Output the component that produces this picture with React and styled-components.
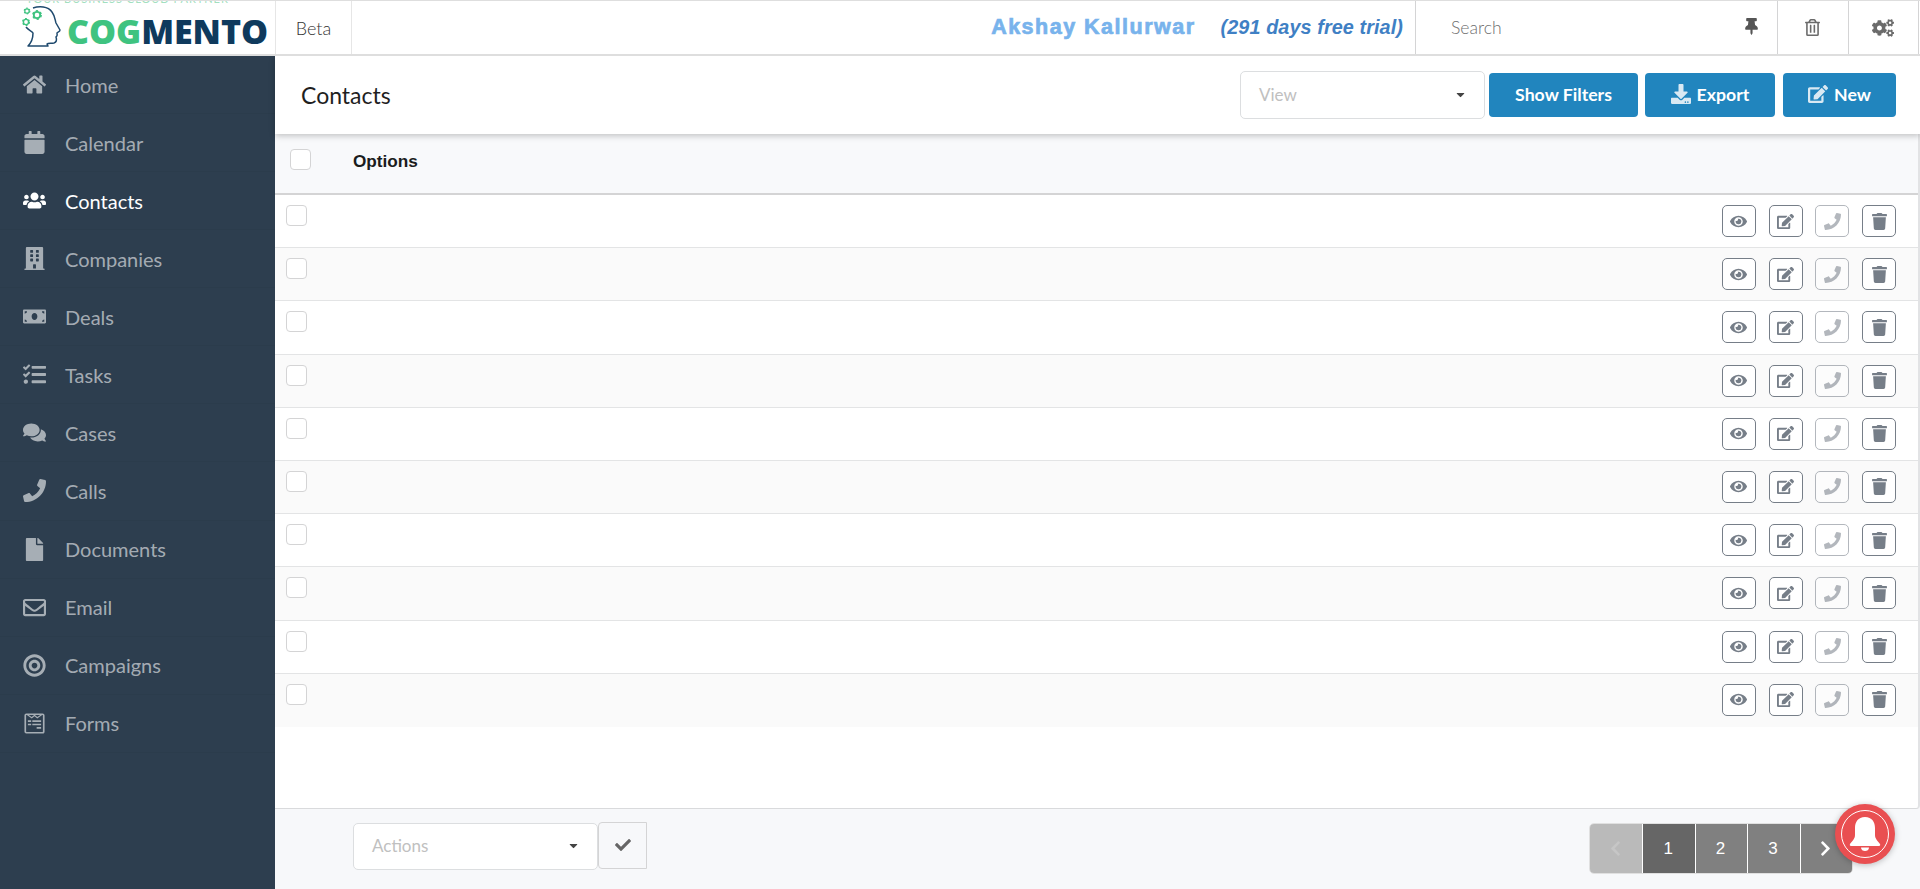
import React from 'react';
import styled, { createGlobalStyle } from 'styled-components';
import {
  FaBuilding, FaBullseye, FaCalendar, FaCaretDown, FaCheck, FaChevronLeft, FaChevronRight,
  FaCogs, FaComments, FaDownload, FaEdit, FaEye, FaFile, FaHome, FaMoneyBill, FaPhone, FaRegEnvelope,
  FaRegTrashAlt, FaTasks, FaThumbtack, FaTrash, FaUsers, FaWpforms,
} from 'react-icons/fa';

const GlobalStyle = createGlobalStyle`
  html, body { margin: 0; padding: 0; height: 100%; overflow: hidden; background: #fff; }
  body { font-family: Lato, "Open Sans", sans-serif; color: #1b1c1d; }
  * { box-sizing: border-box; }
`;

const Page = styled.div`
  position: relative;
  width: 1920px;
  height: 889px;
  display: flex;
  flex-direction: column;
  overflow: hidden;
`;

const TopBar = styled.header`
  height: 56px;
  flex: none;
  display: flex;
  align-items: stretch;
  padding-right: 1px;
  background: #fff;
  border-top: 1px solid #dedede;
  border-bottom: 2px solid #dedede;
  z-index: 3;
`;

const LogoCell = styled.div`
  position: relative;
  width: 276px;
  flex: none;
  overflow: hidden;
  display: flex;
  align-items: center;
  padding: 7px 0 0 21px;
  border-right: 1px solid #e6e6e6;
`;

const Tagline = styled.span`
  position: absolute;
  top: -9px;
  left: 26px;
  font-size: 11px;
  letter-spacing: 1px;
  white-space: nowrap;
  color: #a3dfc0;
`;

const LogoText = styled.span`
  margin-left: 4px;
  font-family: "Open Sans", sans-serif;
  font-size: 34px;
  font-weight: 800;
  line-height: 1;
  letter-spacing: -0.05px;
  color: #0f3a5d;

  em {
    font-style: normal;
    color: #3fc380;
  }
`;

const HeadSvg = styled.svg`
  align-self: flex-start;
  margin-top: -3px;
  flex: none;
`;

const BetaCell = styled.div`
  width: 76px;
  flex: none;
  display: flex;
  align-items: center;
  justify-content: center;
  font-size: 18px;
  font-weight: 300;
  color: #333;
  border-right: 1px solid #e6e6e6;
`;

const Account = styled.div`
  flex: 1;
  display: flex;
  justify-content: flex-end;
  align-items: center;
  gap: 25px;
  padding-right: 12px;
  font-family: "Liberation Sans", Arial, sans-serif;
  font-weight: 700;
`;

const UserName = styled.span`
  font-size: 21.5px;
  letter-spacing: 1.5px;
  color: #78b3ec;
  -webkit-text-stroke: 0.7px #78b3ec;
`;

const Trial = styled.span`
  font-size: 19.8px;
  font-style: italic;
  letter-spacing: 0.1px;
  color: #3f80c4;
`;

const SearchCell = styled.div`
  width: 362px;
  flex: none;
  display: flex;
  align-items: center;
  justify-content: space-between;
  padding: 0 17px 0 35px;
  font-size: 17.6px;
  font-weight: 300;
  color: #6f6f6f;
  border-left: 1px solid #d4d4d5;

  svg { font-size: 17px; color: #555; margin-top: -2px; }
`;

const IconCell = styled.div`
  width: ${p => p.$width}px;
  flex: none;
  display: flex;
  align-items: center;
  justify-content: center;
  padding-right: 2px;
  color: #6b6b6b;
  font-size: ${p => p.$size}px;
  border-left: 1px solid #d4d4d5;
  border-right: ${p => (p.$last ? '1px solid #d4d4d5' : '0')};
`;

const Body = styled.div`
  flex: 1;
  min-height: 0;
  display: flex;
`;

const Sidebar = styled.nav`
  width: 275px;
  flex: none;
  background: #2d3e4f;
`;

const NavItem = styled.a`
  height: 58.07px;
  display: flex;
  align-items: center;
  font-size: 20px;
  color: ${p => (p.$active ? '#fff' : 'rgba(255, 255, 255, 0.58)')};
  border-bottom: 1px solid rgba(0, 0, 0, 0.03);
`;

const NavIcon = styled.span`
  width: 65px;
  flex: none;
  display: flex;
  justify-content: center;
  padding-left: 4px;
  font-size: 23px;
`;

const Main = styled.main`
  flex: 1;
  min-width: 0;
  display: flex;
  flex-direction: column;
  background: #f7f8fa;
`;

const PageHead = styled.div`
  height: 78px;
  flex: none;
  display: flex;
  align-items: center;
  padding: 0 24px 0 26px;
  background: #fff;
  box-shadow: 0 2px 6px rgba(0, 0, 0, 0.22);
  position: relative;
  z-index: 2;
`;

const Title = styled.h1`
  flex: 1;
  margin: 0;
  font-size: 23px;
  font-weight: 400;
  color: #1f1f1f;
`;

const Dropdown = styled.div`
  width: ${p => p.$width}px;
  height: ${p => p.$height}px;
  display: flex;
  align-items: center;
  justify-content: space-between;
  padding: 0 17px 2px 18px;
  background: #fff;
  border: 1px solid #dcdee0;
  border-radius: 5px;
  font-size: 17px;
  color: #c0c0c0;

  svg { color: #444; font-size: 13px; }
`;

const Buttons = styled.div`
  display: flex;
  align-items: center;
`;

const BlueButton = styled.button`
  width: ${p => p.$width}px;
  height: 44px;
  margin-left: ${p => p.$gap}px;
  padding: 0 0 2px;
  display: flex;
  align-items: center;
  justify-content: center;
  gap: 6px;
  border: 0;
  border-radius: 4px;
  background: #2185be;
  color: #fff;
  font-family: Lato, sans-serif;
  font-size: 17.7px;
  font-weight: 700;

  svg { font-size: 20px; color: #d9e9f3; }
`;

const Grid = styled.div`
  flex: 1;
  min-height: 0;
  background: #fff;
  border-right: 2px solid #e2e3e5;
  border-bottom: 1px solid #d9dadc;
  border-bottom-right-radius: 4px;
`;

const HeadRow = styled.div`
  height: 61px;
  display: flex;
  padding: 15px 0 0 15px;
  background: #f8f9fb;
  border-bottom: 2px solid #d4d4d5;
`;

const Check = styled.span`
  display: block;
  width: 21px;
  height: 21px;
  flex: none;
  background: #fff;
  border: 1px solid #d4d4d5;
  border-radius: 4px;
`;

const OptionsLabel = styled.span`
  margin: 2px 0 0 42px;
  font-family: "Liberation Sans", Arial, sans-serif;
  font-size: 17.2px;
  font-weight: 700;
  color: #1b1c1d;
`;

const Row = styled.div`
  height: 53.2px;
  display: flex;
  justify-content: space-between;
  padding: 10px 22px 0 11px;
  background: ${p => (p.$striped ? '#fafafa' : '#fff')};
  border-bottom: 1px solid #e3e4e5;

  &:last-child { border-bottom: 0; }
`;

const RowActions = styled.div`
  display: flex;
  gap: 12.7px;
`;

const ActionButton = styled.span`
  width: 34px;
  height: 32px;
  display: flex;
  align-items: center;
  justify-content: center;
  background: #fff;
  border: 1px solid #767e88;
  border-radius: 5px;
  color: #767e88;
  font-size: 17px;
  opacity: ${p => (p.$disabled ? 0.55 : 1)};
`;

const Footer = styled.footer`
  height: 80px;
  flex: none;
  display: flex;
  align-items: flex-start;
  justify-content: space-between;
  padding: 14px 67px 0 78px;
`;

const Bulk = styled.div`
  display: flex;
  align-items: flex-start;
`;

const ApplyButton = styled.span`
  width: 49px;
  height: 47px;
  margin-top: -1px;
  padding-bottom: 2px;
  display: flex;
  align-items: center;
  justify-content: center;
  background: #f7f8fa;
  border: 1px solid #d4d4d5;
  border-radius: 4px 0 0 4px;
  color: #666;
  font-size: 16px;
`;

const Pager = styled.div`
  height: 51px;
  display: flex;
  overflow: hidden;
  border: 1px solid #e0e0e0;
  border-radius: 5px;
`;

const PageCell = styled.span`
  width: 52.4px;
  padding-right: 2px;
  display: flex;
  align-items: center;
  justify-content: center;
  color: ${p => (p.$disabled ? '#c6c6c6' : '#fff')};
  background: ${p => (p.$disabled ? '#bababa' : p.$current ? '#666' : '#808080')};
  border-left: ${p => (p.$first ? '0' : '1px solid #fff')};
  font-family: "Liberation Sans", Arial, sans-serif;
  font-size: 17px;
`;

const BellBadge = styled.div`
  position: absolute;
  left: 1835px;
  top: 804px;
  width: 60px;
  height: 60px;
  display: flex;
  align-items: center;
  justify-content: center;
  border-radius: 50%;
  background: #e94f51;
  box-shadow: 0 1px 6px rgba(0, 0, 0, 0.25);
  z-index: 5;
`;

const BellRing = styled.span`
  width: 48px;
  height: 48px;
  display: flex;
  align-items: center;
  justify-content: center;
  border: 1px solid #fff;
  border-radius: 50%;
`;

function Gear({ x, y, r }) {
  return (
    <g stroke="#3fc380" fill="none">
      <circle cx={x} cy={y} r={r} strokeWidth={r * 0.55} />
      <circle cx={x} cy={y} r={r * 1.3} strokeWidth={r * 0.5} strokeDasharray={`${r * 0.7} ${r * 0.7}`} />
    </g>
  );
}

function HeadLogo() {
  return (
    <HeadSvg width="42" height="42" viewBox="0 0 42 42" fill="none">
      <path
        d="M12 3 C18 1 27 1 31 7 C34 11 34 15 35 18 L39 25 C39 27 36 27 36 28 C36 30 37 31 35 32 C36 35 36 37 33 38 C30 38.5 27 38 26 39 L27 41 L7 41 C10 38 12 33 12 28 C11 26 7 25 5 22"
        stroke="#1f4a6e"
        strokeWidth="1.5"
        strokeLinejoin="round"
      />
      <Gear x={6} y={6} r={2.2} />
      <Gear x={16} y={10} r={3.2} />
      <Gear x={5} y={17} r={2.6} />
    </HeadSvg>
  );
}

// the bell on the notification badge: dome, flared rim and a loose clapper
function BellIcon() {
  return (
    <svg width="32" height="34" viewBox="0 0 32 34" fill="#fff">
      <path d="M16 0 C9 0 6 5 6 11 L6 18 C6 22 3 24 1 27 C0.5 28 1 29 2 29 L30 29 C31 29 31.5 28 31 27 C29 24 26 22 26 18 L26 11 C26 5 23 0 16 0 Z" />
      <path d="M12 30.5 L20 30.5 C20 33 18 34 16 34 C14 34 12 33 12 30.5 Z" />
    </svg>
  );
}

const navItems = [
  ['Home', FaHome],
  ['Calendar', FaCalendar],
  ['Contacts', FaUsers, true],
  ['Companies', FaBuilding],
  ['Deals', FaMoneyBill],
  ['Tasks', FaTasks],
  ['Cases', FaComments],
  ['Calls', FaPhone],
  ['Documents', FaFile],
  ['Email', FaRegEnvelope],
  ['Campaigns', FaBullseye],
  ['Forms', FaWpforms],
];

const rows = Array.from({ length: 10 }, (_, i) => i);

export default function App() {
  return (
    <Page>
      <GlobalStyle />
      <TopBar>
        <LogoCell>
          <Tagline>YOUR BUSINESS CLOUD PARTNER</Tagline>
          <HeadLogo />
          <LogoText><em>COG</em>MENTO</LogoText>
        </LogoCell>
        <BetaCell>Beta</BetaCell>
        <Account>
          <UserName>Akshay Kallurwar</UserName>
          <Trial>(291 days free trial)</Trial>
        </Account>
        <SearchCell>
          Search
          <FaThumbtack />
        </SearchCell>
        <IconCell $width={71} $size={17}><FaRegTrashAlt /></IconCell>
        <IconCell $width={71} $size={22} $last><FaCogs /></IconCell>
      </TopBar>
      <Body>
        <Sidebar>
          {navItems.map(([label, Icon, active]) => (
            <NavItem key={label} $active={active}>
              <NavIcon><Icon /></NavIcon>
              {label}
            </NavItem>
          ))}
        </Sidebar>
        <Main>
          <PageHead>
            <Title>Contacts</Title>
            <Buttons>
              <Dropdown $width={245} $height={48}>
                View
                <FaCaretDown />
              </Dropdown>
              <BlueButton $width={149} $gap={4}>Show Filters</BlueButton>
              <BlueButton $width={130} $gap={7}><FaDownload />Export</BlueButton>
              <BlueButton $width={113} $gap={8}><FaEdit />New</BlueButton>
            </Buttons>
          </PageHead>
          <Grid>
            <HeadRow>
              <Check />
              <OptionsLabel>Options</OptionsLabel>
            </HeadRow>
            {rows.map(i => (
              <Row key={i} $striped={i % 2 === 1}>
                <Check />
                <RowActions>
                  <ActionButton><FaEye /></ActionButton>
                  <ActionButton><FaEdit /></ActionButton>
                  <ActionButton $disabled><FaPhone /></ActionButton>
                  <ActionButton><FaTrash /></ActionButton>
                </RowActions>
              </Row>
            ))}
          </Grid>
          <Footer>
            <Bulk>
              <Dropdown $width={245} $height={47}>
                Actions
                <FaCaretDown />
              </Dropdown>
              <ApplyButton><FaCheck /></ApplyButton>
            </Bulk>
            <Pager>
              <PageCell $first $disabled><FaChevronLeft /></PageCell>
              <PageCell $current>1</PageCell>
              <PageCell>2</PageCell>
              <PageCell>3</PageCell>
              <PageCell><FaChevronRight /></PageCell>
            </Pager>
          </Footer>
        </Main>
      </Body>
      <BellBadge>
        <BellRing><BellIcon /></BellRing>
      </BellBadge>
    </Page>
  );
}
